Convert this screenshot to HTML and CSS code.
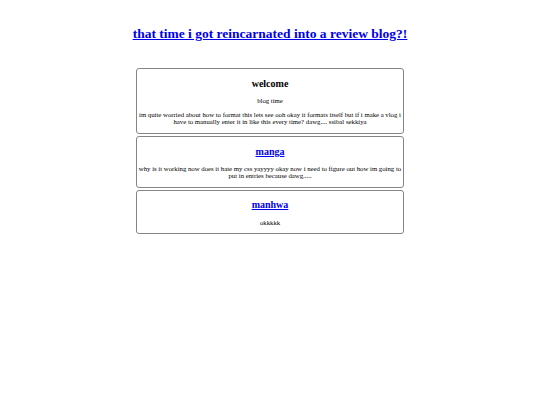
FILE: index.html
```html
<!DOCTYPE html>
<html>
<head>
<meta charset="utf-8">
<link rel="stylesheet" href="styles.css">
</head>
<body>
<header class="header">
  <h1 class="title"><a href="#">that time i got reincarnated into a review blog?!</a></h1>
</header>
<main class="posts">
  <section class="post">
    <h2 class="post-title">welcome</h2>
    <p class="post-text">blog time</p>
    <p class="post-text">im quite worried about how to format this lets see ooh okay it formats itself but if i make a vlog i have to manually enter it in like this every time? dawg.... ssibal sekkiya</p>
  </section>
  <section class="post">
    <h2 class="post-title"><a href="#">manga</a></h2>
    <p class="post-text">why is it working now does it hate my css yayyyy okay now i need to figure out how im going to put in entries because dawg.....</p>
  </section>
  <section class="post">
    <h2 class="post-title"><a href="#">manhwa</a></h2>
    <p class="post-text">okkkkk</p>
  </section>
</main>
</body>
</html>
```

FILE: styles.css
```css
html, body {
  margin: 0;
  padding: 0;
  background: #ffffff;
}
body {
  font-family: "Liberation Serif", "Times New Roman", serif;
  color: #000000;
  font-size: 6.75px;
}
a {
  color: #0000ee;
}
.header {
  text-align: center;
  padding-top: 26px;
}
.title {
  font-size: 13.5px;
  margin: 0;
}
.posts {
  display: flex;
  flex-direction: column;
  align-items: center;
  gap: 2px;
  margin-top: 26px;
}
.post {
  width: 266px;
  border: 1px solid #858585;
  border-radius: 3px;
  text-align: center;
  padding: 0 0 0.4px;
}
.post-title {
  font-size: 10px;
  margin: 8.6px 0;
}
.post-text {
  margin: 7.2px 0;
}
```
